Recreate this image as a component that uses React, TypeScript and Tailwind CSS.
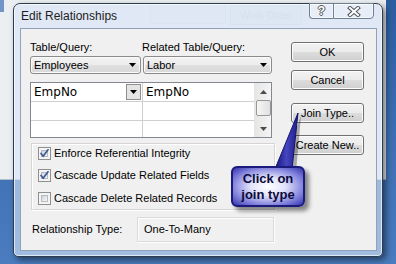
import React from "react";

function Tri({ up = false, color = "#000000" }: { up?: boolean; color?: string }) {
  return (
    <svg width="7" height="4" viewBox="0 0 7 4" className="block">
      <path d={up ? "M0 4 L3.5 0 L7 4 Z" : "M0 0 L7 0 L3.5 4 Z"} fill={color} />
    </svg>
  );
}

function Check({ checked, label }: { checked: boolean; label: string }) {
  return (
    <div className="flex items-center h-[13px]">
      <div className="relative w-[13px] h-[13px] border border-[#8e8f8f] bg-[#f4f4f4] p-[2px] shrink-0">
        <div className="w-full h-full border border-[#b8bcc2] bg-[linear-gradient(135deg,#cfd3d9_0%,#eceef0_70%,#f8f8f8_100%)]" />
        {checked && (
          <svg width="13" height="13" viewBox="0 0 13 13" className="absolute left-[-1px] top-[-1px]">
            <path d="M3 6.5 L5.2 9.3 L10 2.8" fill="none" stroke="#3d5a94" strokeWidth="1.7" strokeLinecap="round" strokeLinejoin="round" />
          </svg>
        )}
      </div>
      <span className="ml-[3px] text-[11px] leading-[13px] text-black whitespace-nowrap">{label}</span>
    </div>
  );
}

function Btn({ children, className }: { children: React.ReactNode; className: string }) {
  return (
    <div
      className={
        "h-[20px] w-[73px] flex items-center justify-center rounded-[3px] border border-[#707070] bg-[linear-gradient(#f2f2f2_0%,#ebebeb_50%,#dddddd_50%,#cfcfcf_100%)] shadow-[inset_0_0_0_1px_#fcfcfc] text-[11px] leading-[13px] text-black whitespace-nowrap " +
        className
      }
    >
      {children}
    </div>
  );
}

function Combo({ text, className }: { text: string; className: string }) {
  return (
    <div
      className={
        "h-[18px] flex items-center rounded-[3px] border border-[#8a8a8a] bg-[linear-gradient(#f3f3f3_0%,#ececec_50%,#e0e0e0_50%,#d8d8d8_100%)] shadow-[inset_0_0_0_1px_#fafafa] pl-[3px] pr-[4px] " +
        className
      }
    >
      <span className="flex-1 text-[11px] leading-[13px] text-black">{text}</span>
      <Tri />
    </div>
  );
}

export default function App() {
  return (
    <div className="relative w-[396px] h-[264px] overflow-hidden bg-[linear-gradient(180deg,#2c5d9f_0%,#3f70b3_55%,#4a7cbf_100%)] font-['Liberation_Sans',Arial,sans-serif]">
      {/* background application window */}
      <div className="absolute left-0 top-0 w-[386px] h-[180px] bg-[#eceff2] border-b border-[#b4c0ce]">
        <div className="absolute left-0 top-0 w-[4px] h-[12px] bg-[#7394c6]" />
        <div className="absolute left-[150px] top-[4px] w-[76px] h-[20px] border border-[#e2e6ea] bg-[#e9ecef]" />
        <div className="absolute left-[230px] top-[5px] w-[72px] h-[20px] border border-[#dde1e6] bg-[#e7eaee] flex items-center justify-center text-[10px] text-[#d5dae0]">
          Work Order
        </div>
      </div>

      {/* dialog window */}
      <div className="absolute left-[13px] top-[3px] w-[370px] h-[254px] flex flex-col rounded-t-[7px] rounded-b-[5px] border border-[#2e3c50] bg-[rgba(214,228,246,0.62)] shadow-[inset_0_0_0_1px_rgba(255,255,255,0.65),3px_3px_6px_rgba(0,0,0,0.5)]">
        {/* title bar */}
        <div className="h-[24px] shrink-0 flex items-start">
          <span className="ml-[7px] mt-[5px] text-[12px] leading-[14px] text-[#1d1d1d] whitespace-nowrap">Edit Relationships</span>
          <div className="ml-auto mr-[8px] -mt-[1px] flex h-[16px]">
            <div className="w-[24px] h-full flex items-center justify-center rounded-bl-[4px] border border-[#6f7f93] border-r-0 bg-[rgba(255,255,255,0.25)] shadow-[inset_0_0_0_1px_rgba(255,255,255,0.55)]">
              <span className="text-[12px] leading-[12px] font-bold text-white [text-shadow:1px_0_0_#555,-1px_0_0_#555,0_1px_0_#555,0_-1px_0_#555]">?</span>
            </div>
            <div className="w-[41px] h-full flex items-center justify-center rounded-br-[4px] border border-[#6f7f93] bg-[rgba(255,255,255,0.25)] shadow-[inset_0_0_0_1px_rgba(255,255,255,0.55)]">
              <svg width="14" height="11" viewBox="0 0 14 11">
                <path d="M3 2 L11 9 M11 2 L3 9" stroke="#4f5558" strokeWidth="4" strokeLinecap="square" />
                <path d="M3 2 L11 9 M11 2 L3 9" stroke="#ffffff" strokeWidth="2" strokeLinecap="square" />
              </svg>
            </div>
          </div>
        </div>

        {/* client area */}
        <div className="flex-1 ml-[6px] mr-[5px] mb-[5px] bg-[#f0f0f0] border border-[#8fa2b8] flex">
          {/* left column */}
          <div className="ml-[9px] w-[246px] flex flex-col">
            <div className="mt-[12px] h-[13px] flex text-[11px] leading-[13px] text-black whitespace-nowrap">
              <span className="w-[112px]">Table/Query:</span>
              <span>Related Table/Query:</span>
            </div>
            <div className="mt-[2px] flex gap-[2px]">
              <Combo text="Employees" className="w-[111px]" />
              <Combo text="Labor" className="w-[129px]" />
            </div>

            {/* grid */}
            <div className="mt-[8px] w-[242px] h-[56px] border border-[#828790] bg-white flex">
              <div className="w-[112px] border-r border-[#cfcfcf] flex flex-col">
                <div className="h-[19px] border-b border-[#cfcfcf] flex items-center pl-[3px]">
                  <span className="flex-1 text-[12px] leading-[14px] text-black font-['DejaVu_Sans',sans-serif]">EmpNo</span>
                  <div className="w-[15px] h-[16px] mr-[1px] border border-[#8f8f8f] bg-[#e4e4e4] flex items-center justify-center">
                    <Tri />
                  </div>
                </div>
                <div className="h-[19px] border-b border-[#cfcfcf]" />
                <div className="flex-1" />
              </div>
              <div className="flex-1 flex flex-col">
                <div className="h-[19px] border-b border-[#cfcfcf] flex items-center pl-[3px]">
                  <span className="text-[12px] leading-[14px] text-black font-['DejaVu_Sans',sans-serif]">EmpNo</span>
                </div>
                <div className="h-[19px] border-b border-[#cfcfcf]" />
                <div className="flex-1" />
              </div>
              <div className="w-[17px] border-l border-[#e4e4e4] bg-[linear-gradient(90deg,#e6e6e6,#f4f4f4)] flex flex-col items-center">
                <div className="h-[17px] flex items-center justify-center">
                  <Tri up color="#4a4a4a" />
                </div>
                <div className="w-[15px] h-[16px] rounded-[2px] border border-[#979797] bg-[linear-gradient(90deg,#f6f6f6,#e0e0e0)]" />
                <div className="flex-1" />
                <div className="h-[17px] flex items-center justify-center">
                  <Tri color="#4a4a4a" />
                </div>
              </div>
            </div>

            {/* checkbox group */}
            <div className="mt-[5px] ml-[1px] w-[244px] h-[67px] border border-[#d5d5d5] shadow-[inset_1px_1px_0_#ffffff,1px_1px_0_#ffffff] flex flex-col pl-[6px]">
              <div className="mt-[3px]">
                <Check checked label="Enforce Referential Integrity" />
              </div>
              <div className="mt-[9px]">
                <Check checked label="Cascade Update Related Fields" />
              </div>
              <div className="mt-[10px]">
                <Check checked={false} label="Cascade Delete Related Records" />
              </div>
            </div>

            {/* relationship type */}
            <div className="mt-[7px] h-[25px] flex items-center">
              <span className="ml-[2px] w-[105px] text-[11px] leading-[13px] text-black whitespace-nowrap">Relationship Type:</span>
              <div className="w-[137px] h-[25px] border border-[#d9d9d9] shadow-[inset_1px_1px_0_#ffffff,1px_1px_0_#ffffff] flex items-center pl-[6px]">
                <span className="text-[11px] leading-[13px] text-black">One-To-Many</span>
              </div>
            </div>
          </div>

          {/* buttons column */}
          <div className="ml-[15px] flex flex-col">
            <Btn className="mt-[13px]">OK</Btn>
            <Btn className="mt-[8px]">Cancel</Btn>
            <Btn className="mt-[13px]">Join Type..</Btn>
            <Btn className="mt-[12px]">Create New..</Btn>
          </div>
        </div>
      </div>

      {/* callout tail */}
      <svg width="396" height="264" viewBox="0 0 396 264" className="absolute left-0 top-0 pointer-events-none">
        <polygon points="279,172 296,172 301,116" fill="rgba(0,0,0,0.3)" />
        <defs>
          <linearGradient id="tailg" x1="0" y1="0" x2="1" y2="0">
            <stop offset="0" stopColor="#15157a" />
            <stop offset="0.5" stopColor="#4545c0" />
            <stop offset="1" stopColor="#1c1c88" />
          </linearGradient>
        </defs>
        <polygon points="275,169 292,169 298,113" fill="url(#tailg)" stroke="#14146e" strokeWidth="1" strokeLinejoin="round" />
      </svg>

      {/* callout box */}
      <div className="absolute left-[231px] top-[166px] w-[74px] h-[41px] rounded-[6px] border-2 border-[#1b1b7e] bg-[radial-gradient(ellipse_at_center,#ffffff_0%,#e2e2fa_35%,#8080dc_72%,#3434aa_100%)] shadow-[4px_4px_4px_rgba(0,0,0,0.45)] flex flex-col items-center justify-center">
        <span className="text-[13px] leading-[16px] font-bold text-[#0b0b3a] whitespace-nowrap">Click on</span>
        <span className="text-[13px] leading-[16px] font-bold text-[#0b0b3a] whitespace-nowrap">join type</span>
      </div>
    </div>
  );
}
